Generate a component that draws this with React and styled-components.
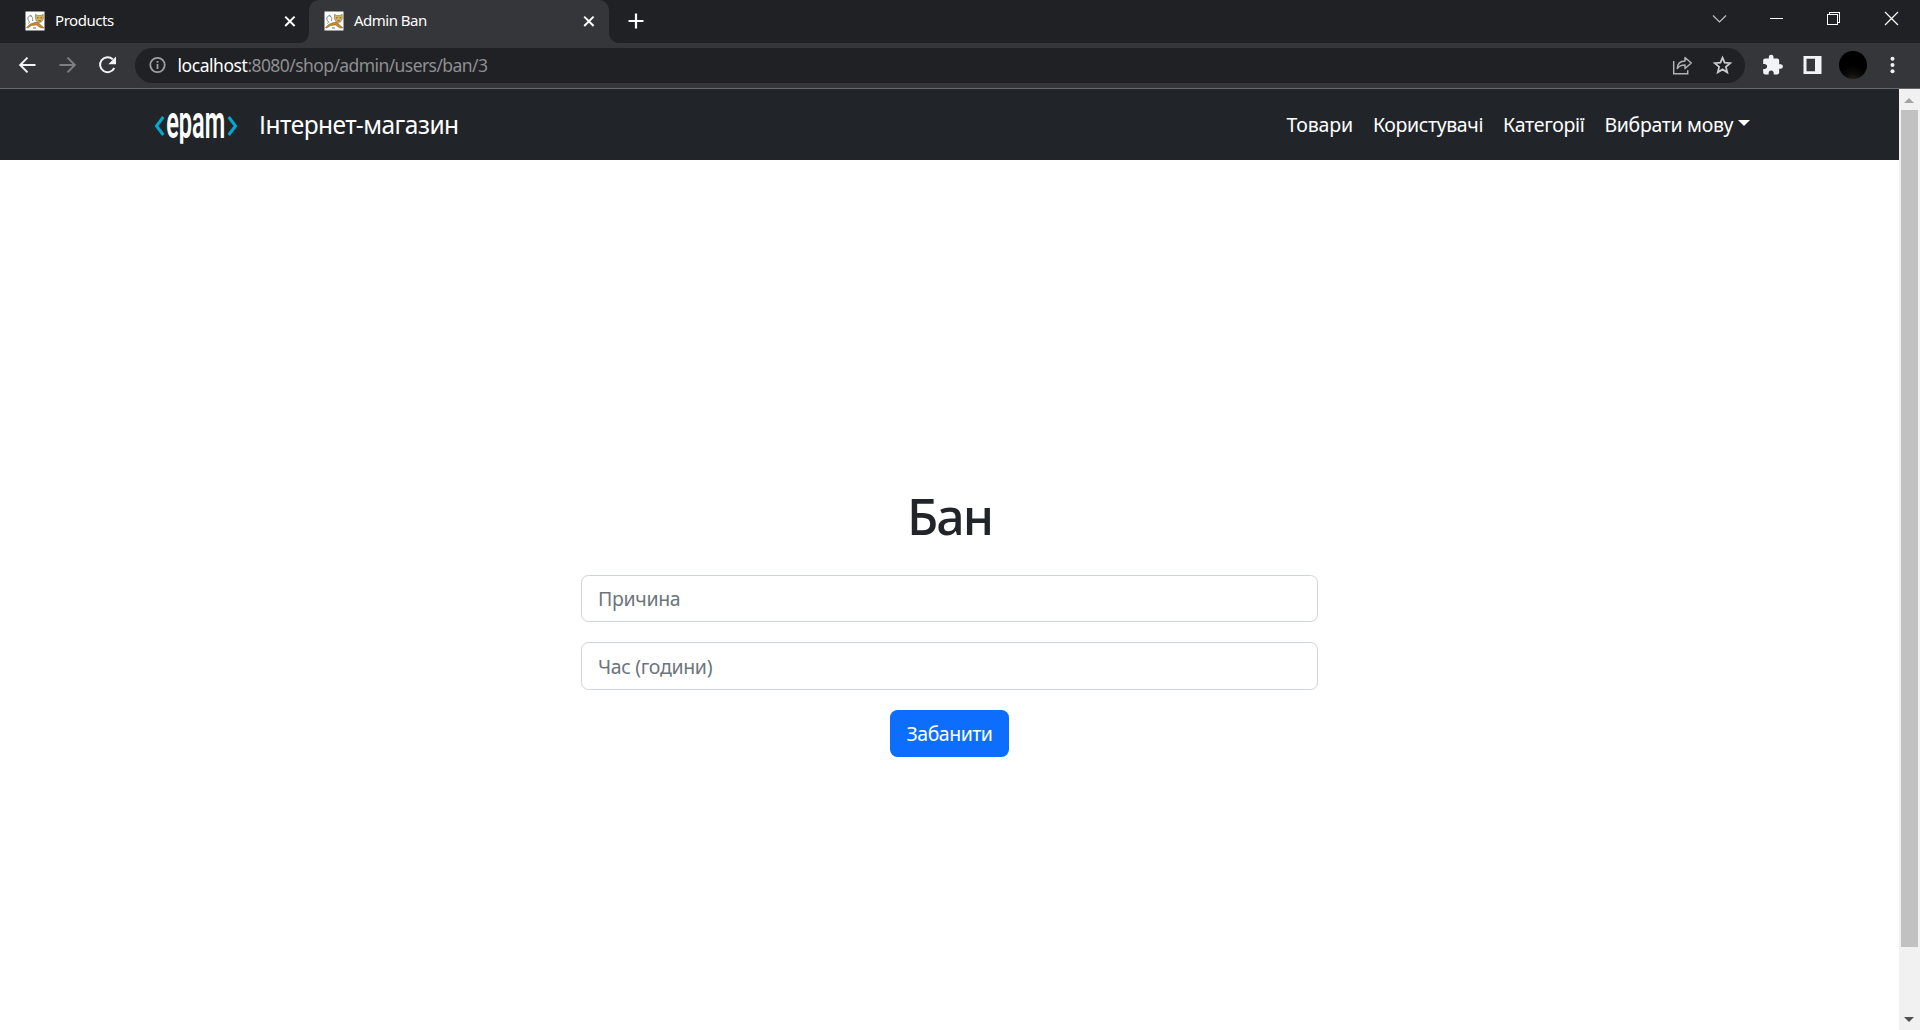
import React from "react";
import styled, { createGlobalStyle } from "styled-components";

const GlobalStyle = createGlobalStyle`
  *, *::before, *::after { box-sizing: border-box; }
  body { margin: 0; overflow: hidden; font-family: "Noto Sans", "Open Sans", sans-serif; }
`;

const Window = styled.div`
  display: flex;
  flex-direction: column;
  width: 1920px;
  height: 1030px;
  background: #fff;
`;

const TabStrip = styled.div`
  display: flex;
  height: 43px;
  background: #202124;
`;

const Tab = styled.div`
  position: relative;
  display: flex;
  align-items: center;
  width: ${(p) => (p.$active ? 300 : 309)}px;
  height: 43px;
  padding: 0 ${(p) => (p.$active ? 12 : 11)}px 1px ${(p) => (p.$active ? 15 : 25)}px;
  border-radius: 10px 10px 0 0;
  background: ${(p) => (p.$active ? "#35363a" : "transparent")};
  color: #fff;

  &::before,
  &::after {
    content: "";
    display: ${(p) => (p.$active ? "block" : "none")};
    position: absolute;
    bottom: 0;
    width: 10px;
    height: 10px;
  }
  &::before {
    left: -10px;
    background: radial-gradient(circle at 0 0, transparent 9.5px, #35363a 10.5px);
  }
  &::after {
    right: -10px;
    background: radial-gradient(circle at 100% 0, transparent 9.5px, #35363a 10.5px);
  }
`;

const TabTitle = styled.span`
  flex: 1;
  padding-bottom: 2px;
  margin-left: 10px;
  font-size: 15px;
  line-height: 20px;
  letter-spacing: ${(p) => p.$spacing}px;
  white-space: nowrap;
`;

const Icon = styled.svg`
  display: block;
  flex: none;
  width: ${(p) => p.$size}px;
  height: ${(p) => p.$size}px;
  fill: none;
`;

const NewTab = styled.div`
  display: flex;
  align-items: center;
  padding: 0 0 1px 17px;
`;

const WindowControls = styled.div`
  display: flex;
  margin-left: auto;
`;

const ControlButton = styled.div`
  display: flex;
  justify-content: center;
  width: 57.3px;
  padding-top: 8px;
`;

const Toolbar = styled.div`
  display: flex;
  align-items: center;
  height: 46px;
  padding: 0 15px 1px 15px;
  border-bottom: 1px solid #66676a;
  background: #35363a;
`;

const NavButtons = styled.div`
  display: flex;
  gap: 16px;
  width: 120px;
`;

const Omnibox = styled.div`
  display: flex;
  align-items: center;
  width: 1610px;
  height: 35px;
  padding: 0 11px 0 13px;
  border-radius: 18px;
  background: #202124;
`;

const Address = styled.div`
  flex: 1;
  margin-left: 9.5px;
  font-size: 17.5px;
  line-height: 24px;
  letter-spacing: -0.58px;
  color: #8e8f91;
  white-space: nowrap;
`;

const Host = styled.span`
  color: #fff;
  letter-spacing: -0.45px;
`;

const OmniActions = styled.div`
  display: flex;
  gap: 16px;
`;

const Extensions = styled.div`
  display: flex;
  align-items: center;
  gap: 16px;
  margin-left: 16px;
`;

const Avatar = styled.div`
  width: 28px;
  height: 28px;
  margin: -1px -1px 0 -2px;
  border-radius: 50%;
  background: radial-gradient(circle at 50% 108%, #26241a 0, #0a0a09 28%, #000 50%);
`;

const Viewport = styled.div`
  display: flex;
  flex: 1;
  min-height: 0;
`;

const Page = styled.div`
  display: flex;
  flex-direction: column;
  width: 1899px;
`;

const Navbar = styled.header`
  display: flex;
  align-items: center;
  height: 71px;
  padding: 0 149.5px 0 154px;
  background: #212529;
  color: #fff;
`;

const Logo = styled.svg`
  display: block;
  width: 84px;
  height: 40px;
  overflow: visible;
`;

const Brand = styled.a`
  margin-left: 21px;
  font-size: 24.5px;
  letter-spacing: -0.5px;
  white-space: nowrap;
`;

const Menu = styled.nav`
  display: flex;
  gap: 20px;
  margin-left: auto;
`;

const MenuLink = styled.a`
  display: flex;
  align-items: center;
  font-size: 19.5px;
  letter-spacing: ${(p) => p.$spacing}px;
  white-space: nowrap;
`;

const Caret = styled.span`
  margin: 0 0 3px 4.5px;
  border-top: 6px solid #fff;
  border-left: 6px solid transparent;
  border-right: 6px solid transparent;
`;

const Main = styled.main`
  display: flex;
  flex-direction: column;
  align-items: center;
  padding-top: 326px;
`;

const Title = styled.h1`
  margin: 0 0 29px;
  color: #212529;
  font-size: 50px;
  font-weight: 500;
  line-height: 60px;
  letter-spacing: -2px;
`;

const Form = styled.form`
  display: flex;
  flex-direction: column;
  align-items: center;
  gap: 20px;
  width: 737px;
`;

const Field = styled.input`
  width: 100%;
  height: ${(p) => p.$height}px;
  padding: 0 16px;
  border: 1px solid #ced4da;
  border-radius: 7.5px;
  outline: none;
  background: #fff;
  font-family: inherit;
  font-size: 19.5px;
  letter-spacing: -0.33px;

  &::placeholder {
    color: #6c757d;
    opacity: 1;
  }
`;

const Submit = styled.button`
  width: 119px;
  height: 47px;
  padding: 0;
  border: 0;
  border-radius: 7.5px;
  background: #0d6efd;
  color: #fff;
  font-family: inherit;
  font-size: 19.5px;
  letter-spacing: -0.5px;
`;

const Scrollbar = styled.div`
  display: flex;
  flex-direction: column;
  align-items: center;
  justify-content: space-between;
  width: 21px;
  padding: 9px 1px 8px 0;
  background: #f1f1f1;
`;

const ScrollTrack = styled.div`
  flex: 1;
  width: 17px;
  padding-top: 7px;
`;

const Thumb = styled.div`
  height: 837px;
  background: #c1c1c1;
`;

const Arrow = styled.div`
  border-left: 5px solid transparent;
  border-right: 5px solid transparent;
  border-top: ${(p) => (p.$down ? "5px solid #505050" : "0")};
  border-bottom: ${(p) => (p.$down ? "0" : "5px solid #a3a3a3")};
`;

const Favicon = () => (
  <Icon $size={20} viewBox="0 0 20 20">
    <rect x=".5" y=".5" width="19" height="19" fill="#fff" />
    <path d="M7.500 10C8.500 6 6 4.500 4.500 5S2 8 3.500 9.500 4 12 3.500 12.500M7 5.500 5 4" stroke="#6f7478" strokeWidth=".9" />
    <path d="M1.500 16.500 5 13.200 9.500 11.500 13 11.500 19 17 15.500 16.800 11.500 14 6.500 14.500 3 17Z" fill="#c88a2b" stroke="#765522" strokeWidth=".5" />
    <path d="m10.500 3.200 2 1.300h3.500l2.200-1.300.2 4.600-1.600 2.800-2.500 1.200-2.800-1.500-1-2.800Z" fill="#d9b25e" stroke="#8a713f" strokeWidth=".6" />
    <path d="M12 6.800h1.500M15.500 6.800H17M13.500 9.800h2.300M8 17h3" stroke="#4d4630" strokeWidth=".8" />
  </Icon>
);

const CloseTab = () => (
  <Icon $size={16} viewBox="0 0 16 16" stroke="#fff" strokeWidth="2">
    <path d="m3.2 3.6 9.4 9.4M12.6 3.6 3.2 13" />
  </Icon>
);

export default function App() {
  return (
    <Window>
      <GlobalStyle />
      <TabStrip>
        <Tab>
          <Favicon />
          <TabTitle $spacing={-0.45}>Products</TabTitle>
          <CloseTab />
        </Tab>
        <Tab $active>
          <Favicon />
          <TabTitle $spacing={-0.52}>Admin Ban</TabTitle>
          <CloseTab />
        </Tab>
        <NewTab>
          <Icon $size={20} viewBox="0 0 20 20" stroke="#fff" strokeWidth="2.2">
            <path d="M10 2.500v15M2.500 10h15" />
          </Icon>
        </NewTab>
        <WindowControls>
          <ControlButton>
            <Icon $size={21} viewBox="0 0 21 21" stroke="#c4c5c7" strokeWidth="1.1">
              <path d="m4 7.500 6.500 6.500L17 7.500" />
            </Icon>
          </ControlButton>
          <ControlButton>
            <Icon $size={21} viewBox="0 0 21 21" stroke="#fff">
              <path d="M4 10.500h13" />
            </Icon>
          </ControlButton>
          <ControlButton>
            <Icon $size={21} viewBox="0 0 21 21" stroke="#fff" shapeRendering="crispEdges">
              <path d="M3.500 6.500h10v10h-10zM5.500 6.500v-2h10v10h-2" />
            </Icon>
          </ControlButton>
          <ControlButton>
            <Icon $size={21} viewBox="0 0 21 21" stroke="#fff" strokeWidth="1.2">
              <path d="m4 4 13 13M17 4 4 17" />
            </Icon>
          </ControlButton>
        </WindowControls>
      </TabStrip>

      <Toolbar>
        <NavButtons>
          <Icon $size={24} viewBox="0 0 24 24" stroke="#f1f3f4" strokeWidth="2">
            <path d="M20.500 12H5.500M12.500 4.600 5.200 12l7.300 7.400" />
          </Icon>
          <Icon $size={24} viewBox="0 0 24 24" stroke="#7e7f83" strokeWidth="2">
            <path d="M4.500 12h15M12.500 4.600l7.300 7.400-7.300 7.400" />
          </Icon>
          <Icon $size={24} viewBox="0 0 24 24">
            <path d="M17.800 6.300A7.500 7.500 0 1 0 19.300 15" stroke="#f1f3f4" strokeWidth="2" />
            <path d="M21 3.500v7.700h-7.700z" fill="#f1f3f4" />
          </Icon>
        </NavButtons>
        <Omnibox>
          <Icon $size={20} viewBox="0 0 20 20" stroke="#9aa0a6" strokeWidth="1.8">
            <circle cx="9.500" cy="10" r="7.200" />
            <path d="M9.500 9v5M9.500 5.900v1.900" />
          </Icon>
          <Address><Host>localhost</Host>:8080/shop/admin/users/ban/3</Address>
          <OmniActions>
            <Icon $size={24} viewBox="0 0 24 24" stroke="#aeb1b5" strokeWidth="1.500">
              <path d="M3.700 8v12.800h14v-3.500" />
              <path d="M7.300 15.500c.3-5 3.200-7.400 7.700-7.400V4.500l6.300 5.500-6.300 5.500V12c-3.500 0-5.900.9-7.700 3.500Z" strokeLinejoin="round" />
            </Icon>
            <Icon $size={24} viewBox="0 0 24 24" stroke="#c7cacd" strokeWidth="1.800">
              <path d="m12.500 4.700 2.100 5 5.600.5-4.300 3.700 1.300 5.400-4.700-2.900-4.700 2.900 1.300-5.400-4.300-3.700 5.600-.5Z" />
            </Icon>
          </OmniActions>
        </Omnibox>
        <Extensions>
          <Icon $size={24} viewBox="0 0 24 24">
            <path fill="#f1f3f4" transform="translate(.3 .8) scale(.94)" d="M20.500 11H19V7c0-1.100-.9-2-2-2h-4V3.500a2.500 2.500 0 0 0-5 0V5H4c-1.100 0-1.990.9-1.990 2v3.800H3.500c1.490 0 2.700 1.210 2.700 2.700s-1.210 2.700-2.700 2.700H2V20c0 1.100.9 2 2 2h3.800v-1.500c0-1.490 1.210-2.700 2.700-2.700s2.700 1.210 2.700 2.700V22H17c1.100 0 2-.9 2-2v-4h1.500a2.500 2.500 0 0 0 0-5Z" />
          </Icon>
          <Icon $size={24} viewBox="0 0 24 24">
            <path fill="#f1f3f4" fillRule="evenodd" d="M2.500 3h18v18h-18zM5.500 5.700v12.600h8.500V5.700z" />
          </Icon>
          <Avatar />
          <Icon $size={20} viewBox="0 0 20 20">
            <g fill="#f1f3f4">
              <circle cx="10.500" cy="3.800" r="2" />
              <circle cx="10.500" cy="10" r="2" />
              <circle cx="10.500" cy="16.200" r="2" />
            </g>
          </Icon>
        </Extensions>
      </Toolbar>

      <Viewport>
        <Page>
          <Navbar>
            <Logo viewBox="0 0 84 40">
              <path d="m9.300 12-6.800 9 6.800 9M74.700 12l6.800 9-6.800 9" fill="none" stroke="#00a9ce" strokeWidth="3" />
              <text fill="#fff" fontFamily="Roboto, sans-serif" fontSize="46" fontWeight="600" textLength="118" lengthAdjust="spacingAndGlyphs" transform="translate(12.200 32.600) scale(.5 1)">epam</text>
              <rect x="22" y="38.800" width="14" height="6" fill="#212529" />
            </Logo>
            <Brand>Інтернет-магазин</Brand>
            <Menu>
              <MenuLink $spacing={-0.15}>Товари</MenuLink>
              <MenuLink $spacing={-0.38}>Користувачі</MenuLink>
              <MenuLink $spacing={-0.3}>Категорії</MenuLink>
              <MenuLink $spacing={-0.33}>Вибрати мову<Caret /></MenuLink>
            </Menu>
          </Navbar>
          <Main>
            <Title>Бан</Title>
            <Form>
              <Field $height={47} placeholder="Причина" />
              <Field $height={48} placeholder="Час (години)" />
              <Submit type="button">Забанити</Submit>
            </Form>
          </Main>
        </Page>
        <Scrollbar>
          <Arrow />
          <ScrollTrack><Thumb /></ScrollTrack>
          <Arrow $down />
        </Scrollbar>
      </Viewport>
    </Window>
  );
}
